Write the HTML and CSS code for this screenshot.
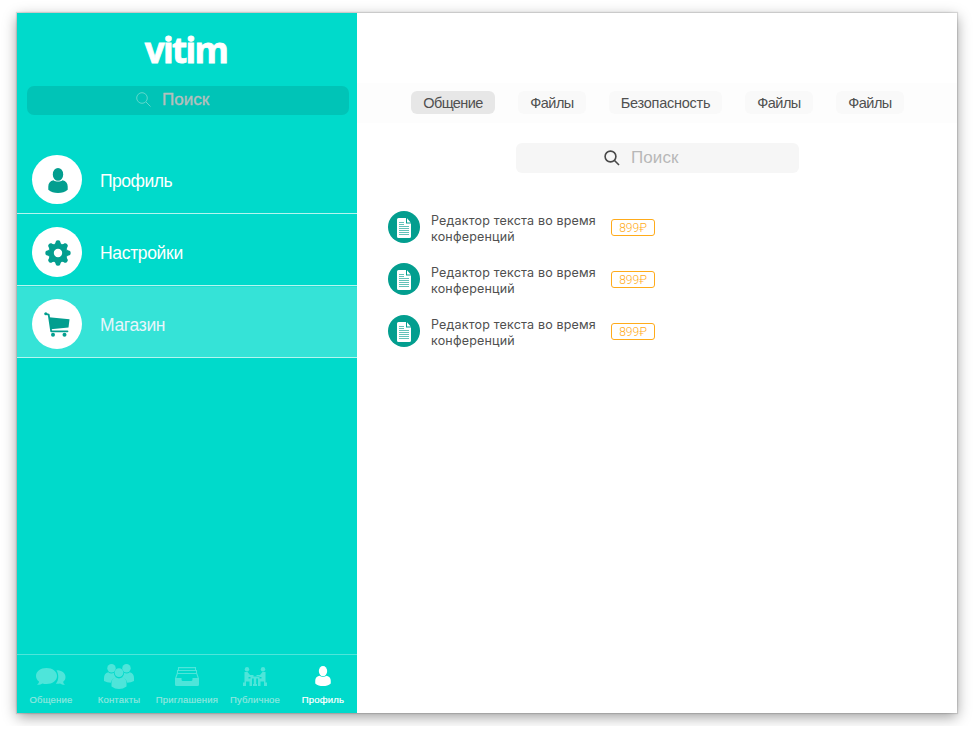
FILE: index.html
```html
<!DOCTYPE html>
<html lang="ru">
<head>
<meta charset="utf-8">
<title>vitim</title>
<link rel="stylesheet" href="styles.css">
</head>
<body>
<svg class="defs" aria-hidden="true">
  <symbol id="person" viewBox="0 0 20 25"><ellipse cx="10" cy="6.400" rx="5.200" ry="6.400"/><path d="M5.500 12.200C2 13 .3 15.200.3 18.500V21.800C3 24.200 6 25 10 25s7-.8 9.700-3.200V18.500c0-3.300-1.700-5.500-5.200-6.300C13.200 13.200 11.700 13.600 10 13.600s-3.200-.4-4.500-1.400z"/></symbol>
  <symbol id="doc" viewBox="0 0 14 20"><path fill="#fff" d="M1.500 0H9v5.500h5V18.500A1.500 1.500 0 0 1 12.500 20h-11A1.500 1.500 0 0 1 0 18.500v-17A1.500 1.500 0 0 1 1.500 0zM10 .3 13.700 4.500H10z"/><path stroke="#62c2b8" stroke-width="1" d="M2 4.500h5M2 6.500h5M2 8.500h10M2 10.500h10M2 12.500h10M2 14.500h10M2 16.500h10"/></symbol>
</svg>
<div class="window">
  <aside class="sidebar">
    <h1 class="logo">vitim</h1>
    <div class="search side-search">
      <svg width="15" height="15" viewBox="0 0 15 15" fill="none" stroke="#5fd8cc" stroke-width="1"><circle cx="6" cy="6" r="5.300"/><path d="M10 10l4.500 4.500"/></svg>
      <span>Поиск</span>
    </div>
    <nav class="menu">
      <a class="row first"><i class="disc"><svg width="20" height="25"><use href="#person"/></svg></i><span>Профиль</span></a>
      <a class="row"><i class="disc"><svg width="26" height="26" viewBox="-13 -13 26 26"><circle r="6.800" fill="none" stroke="#039e8f" stroke-width="5.200"/><g id="teeth"><path id="tooth" d="M-4-8.500Q-2.400-9.500-2.200-11.500Q-1.800-12.700 0-12.700T2.200-11.500Q2.400-9.500 4-8.500z"/><use href="#tooth" transform="rotate(45)"/><use href="#tooth" transform="rotate(90)"/><use href="#tooth" transform="rotate(135)"/></g><use href="#teeth" transform="rotate(180)"/></svg></i><span>Настройки</span></a>
      <a class="row active"><i class="disc cart"><svg width="26" height="25" viewBox="0 0 26 25"><path d="M5 5.200 25.500 7.200 24.500 15.500 6.800 17.200z"/><path d="M1.500 1.800 4.700 2.600 7.200 19.300H23.500" fill="none" stroke="#039e8f" stroke-width="1.800" stroke-linecap="round" stroke-linejoin="round"/><circle cx="1.800" cy="1.800" r="1.500"/><circle cx="9" cy="22.700" r="2"/><circle cx="20.500" cy="22.700" r="2"/></svg></i><span>Магазин</span></a>
    </nav>
    <footer class="tabbar">
      <a><i><svg width="30" height="17" viewBox="0 0 30 17"><path d="M10.500 0C16.500 0 21 3.400 21 8s-4.500 8-10.500 8c-1.500 0-2.800-.2-4-.6C5 16.500 3 17 1 16.800c1.200-.8 2-2 2-3.200C1.100 12.200 0 10.200 0 8c0-4.600 4.500-8 10.500-8zM20.500 2.300c5 0 9 2.700 9 6.700 0 2-.8 3.600-2.300 4.800 0 1.200.6 2.200 1.800 3-2 .1-3.500-.4-5-1.400-1.300.4-2.800.5-4.200.3C23 12.300 23 6.500 20.500 2.300z"/></svg></i><span>Общение</span></a>
      <a><i><svg width="30" height="25" viewBox="0 0 30 25"><circle cx="7.500" cy="4.300" r="4.200"/><circle cx="22.500" cy="4.300" r="4.200"/><circle cx="15" cy="8.600" r="4.400"/><path d="M4.200 8.200Q7 10.300 9.800 8.800C10 11 11 12.300 12 13.200Q7.500 14.500 6.800 18.800Q3 18.800 0 17V14Q0 9.500 4.200 8.200zM25.800 8.200Q23 10.300 20.200 8.800C20 11 19 12.300 18 13.200Q22.500 14.500 23.200 18.800Q27 18.800 30 17V14Q30 9.500 25.800 8.200zM11.500 13.300Q15 15.500 18.500 13.300Q22.500 14.800 22.500 19V22.500Q19 25 15 25T7.500 22.500V19Q7.500 14.800 11.500 13.300z"/></svg></i><span>Контакты</span></a>
      <a><i><svg width="24" height="19" viewBox="0 0 24 19"><path d="M0 11H6.500V12.500Q6.500 14 8 14H16Q17.500 14 17.500 12.500V11H24V17.500Q24 19 22.500 19H1.500Q0 19 0 17.500z"/><path d="M.7 11 2.300 6.500H21.700L23.300 11M2.500 6V3.500H21.500V6M3.500 3V.6H20.500V3" fill="none" stroke="#4ee5da" stroke-width="1.100"/></svg></i><span>Приглашения</span></a>
      <a><i><svg width="24" height="19" viewBox="0 0 24 19"><circle cx="4" cy="2.200" r="2.200"/><circle cx="20" cy="2.200" r="2.200"/><path d="M1.500 5H4.500L7 8H10.500V10H5.500V11.500H9V19H6.500V14.500H3V19H0V15.500H1.500zM22.500 5H19.500L17 8H13.500V10H18.500V11.500H15V19H17.500V14.500H21V19H24V15.500H22.500zM7.500 9.500H16.500V11.500H13.200V17H14V19H10V17H10.800V11.500H7.500z"/></svg></i><span>Публичное</span></a>
      <a class="on"><i><svg width="16" height="20" viewBox="0 0 20 25"><use href="#person" width="20" height="25"/></svg></i><span>Профиль</span></a>
    </footer>
  </aside>
  <main class="content">
    <nav class="tabs">
      <a class="tab t1 selected">Общение</a><a class="tab">Файлы</a><a class="tab t3">Безопасность</a><a class="tab">Файлы</a><a class="tab">Файлы</a>
    </nav>
    <div class="search main-search">
      <svg width="16" height="16" viewBox="0 0 16 16" fill="none" stroke="#484848" stroke-width="1.600"><circle cx="6.500" cy="6.500" r="5.400"/><path d="M10.500 10.500l4.500 4.500"/></svg>
      <span>Поиск</span>
    </div>
    <ul class="list">
      <li><i class="badge"><svg width="14" height="20"><use href="#doc"/></svg></i><p>Редактор текста во время<br>конференций</p><b class="price">899₽</b></li>
      <li><i class="badge"><svg width="14" height="20"><use href="#doc"/></svg></i><p>Редактор текста во время<br>конференций</p><b class="price">899₽</b></li>
      <li><i class="badge"><svg width="14" height="20"><use href="#doc"/></svg></i><p>Редактор текста во время<br>конференций</p><b class="price">899₽</b></li>
    </ul>
  </main>
</div>
</body>
</html>
```
FILE: styles.css
```css
* { box-sizing: border-box; }
body { margin: 0; padding: 13px 17px; background: #fff; font-family: "Liberation Sans", Arial, sans-serif; overflow: hidden; }
.defs { display: none; }
.window { display: flex; width: 940px; height: 700px; background: #fff; box-shadow: 0 0 1px 1px rgba(0,0,0,.12), 0 4px 13px rgba(0,0,0,.38); }
svg { display: block; }
i { font-style: normal; }

.sidebar { width: 340px; background: #00dacb; display: flex; flex-direction: column; color: #fff; }
.logo { margin: 0; height: 73px; padding-top: 14px; font: 700 35px/46px "Open Sans", sans-serif; letter-spacing: -1.7px; text-align: center; padding-right: 2px; -webkit-text-stroke: .8px #fff; }
.search { display: flex; align-items: center; white-space: nowrap; }
.side-search { margin: 0 8px 0 10px; height: 29px; border-radius: 7px; background: #00c4b7; padding-left: 109px; gap: 11px; font-size: 17px; letter-spacing: .05px; color: #b5bfbd; padding-bottom: 2px; -webkit-text-stroke: .4px #b5bfbd; }
.menu { margin-top: 27px; }
.row { display: flex; align-items: center; height: 72px; padding: 5px 0 0 15px; gap: 18px; font-size: 17.5px; letter-spacing: -.33px; border-bottom: 1px solid #b4f5ef; }
.row span { padding-top: 3px; }
.row.first { padding-top: 4px; letter-spacing: -.5px; }
.row.first span { padding-top: 4px; }
.disc { width: 50px; height: 50px; border-radius: 50%; background: #fff; display: grid; place-items: center; fill: #039e8f; padding: 1px 0 0 1px; }
.row.first .disc { height: 49px; }
.disc.cart { padding: 1px 1px 0 0; }
.active { background: #35e3d7; color: #e8f5fb; box-shadow: inset 0 1px #1fdfd2; }
.tabbar { margin-top: auto; height: 59px; border-top: 1px solid #4ee5da; display: grid; grid-template-columns: repeat(5, 68px); font-size: 9.5px; color: #8fe7df; fill: #4ee5da; }
.tabbar a { display: flex; flex-direction: column; align-items: center; white-space: nowrap; letter-spacing: .2px; }
.tabbar i { height: 38px; padding-top: 4px; display: grid; place-items: center; }
.tabbar span { line-height: 14px; -webkit-text-stroke: .2px; }
.tabbar .on { color: #fff; fill: #fff; }

.content { flex: 1; padding-top: 70px; color: #505050; }
.tabs { height: 40px; background: #fdfdfd; display: flex; gap: 23px; padding: 8px 0 0 54px; }
.tab { width: 68px; height: 23px; border-radius: 6px; background: #f9f9f9; font-size: 14.5px; line-height: 24px; letter-spacing: -.5px; text-align: center; white-space: nowrap; }
.t1 { width: 84px; letter-spacing: -.6px; }
.t3 { width: 113px; letter-spacing: -.25px; }
.selected { background: #e7e7e7; }
.main-search { width: 283px; height: 30px; margin: 20px 0 0 159px; border-radius: 6px; background: #f6f6f6; padding-left: 88px; gap: 11px; font-size: 17px; letter-spacing: .1px; color: #b8b8b8; padding-bottom: 1px; }
.list { list-style: none; margin: 38px 0 0 31px; padding: 0; display: grid; gap: 20px; }
.list li { display: flex; align-items: center; height: 32px; }
.badge { width: 32px; height: 32px; border-radius: 50%; background: #039e8f; display: grid; place-items: center; padding-top: 1px; }
.list p { margin: 3px 0 0 11px; width: 180px; font: 12.5px/16px Inter, sans-serif; letter-spacing: .18px; white-space: nowrap; }
.price { width: 44px; height: 17px; margin-top: 1px; border: 1px solid #ffab1a; border-radius: 3px; font: 300 12px/16px Roboto, sans-serif; color: #ffab1a; text-align: center; }
```
